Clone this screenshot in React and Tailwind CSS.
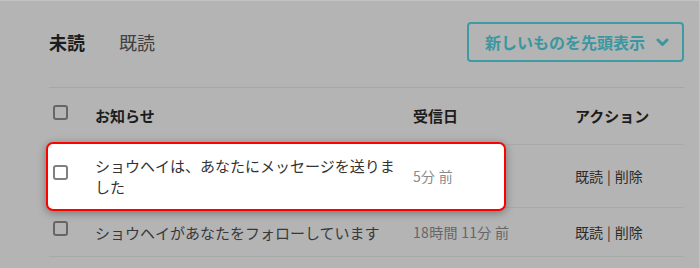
import React from "react";

const Checkbox = ({ className = "" }) => (
  <span className={`block w-[15px] h-[15px] border-2 rounded-[3px] ${className}`} />
);

const rows = [
  {
    id: 1,
    text: "ショウヘイは、あなたにメッセージを送りました",
    date: "5分 前",
    highlight: true,
    height: "h-[63px]",
  },
  {
    id: 2,
    text: "ショウヘイがあなたをフォローしています",
    date: "18時間 11分 前",
    highlight: false,
    height: "h-[49px]",
  },
];

const App = () => {
  return (
    <div
      className="w-[700px] h-[268px] bg-[#b4b4b4] border-t border-r border-[#c4c4c4] overflow-hidden pl-[49px] pr-[15px] pt-[21px]"
      style={{ fontFamily: '"Noto Sans CJK JP", "Noto Sans", sans-serif' }}
    >
      {/* tabs + sort */}
      <div className="flex items-center justify-between h-[40px]">
        <div className="flex items-center gap-[34px] text-[18px] leading-none">
          <span className="font-bold text-[#1c1c1c]">未読</span>
          <span className="text-[#404040]">既読</span>
        </div>
        <button
          type="button"
          className="w-[217px] h-[40px] border-2 border-[#3f9ba3] rounded-[4px] flex items-center justify-between pl-[16px] pr-[13px] text-[16px] font-bold text-[#3a97a0]"
        >
          <span>新しいものを先頭表示</span>
          <svg width="13" height="9" viewBox="0 0 13 9" fill="none">
            <path d="M2 2l4.5 4.5L11 2" stroke="#3a97a0" strokeWidth="3" strokeLinecap="round" strokeLinejoin="round" />
          </svg>
        </button>
      </div>

      <div className="mt-[25px] border-t border-[#a7a7a7]" />

      {/* header */}
      <div className="flex items-center h-[57px] border-b border-[#a9a9a9] text-[15px] font-bold text-[#1c1c1c]">
        <div className="w-[46px] pl-[4px] mb-[7px]">
          <Checkbox className="border-[#666]" />
        </div>
        <div className="w-[318px]">お知らせ</div>
        <div className="w-[162px]">受信日</div>
        <div>アクション</div>
      </div>

      {rows.map((row) => (
        <div
          key={row.id}
          className={`relative flex items-center ${row.height} border-b border-[#a9a9a9]`}
        >
          {row.highlight && (
            <div className="absolute left-[-3px] top-[-3px] w-[460px] h-[69px] bg-white border-2 border-[#f00] rounded-[7px] shadow-[0_2px_8px_rgba(0,0,0,0.35)]" />
          )}
          <div className="relative w-[46px] pl-[4px] mb-[7px]">
            <Checkbox className={row.highlight ? "border-[#808080] bg-white" : "border-[#666]"} />
          </div>
          <div
            className={`relative w-[318px] pr-[12px] text-[15px] leading-[21px] ${
              row.highlight ? "text-[#333]" : "text-[#383838]"
            }`}
          >
            {row.text}
          </div>
          <div
            className={`relative w-[162px] text-[14px] tracking-[0.3px] ${
              row.highlight ? "text-[#8a8a8a]" : "text-[#666]"
            }`}
          >
            {row.date}
          </div>
          <div className="relative text-[14px] text-[#2c2c2c]">
            既読<span className="mx-[4px]">|</span>削除
          </div>
        </div>
      ))}
    </div>
  );
};

export default App;
